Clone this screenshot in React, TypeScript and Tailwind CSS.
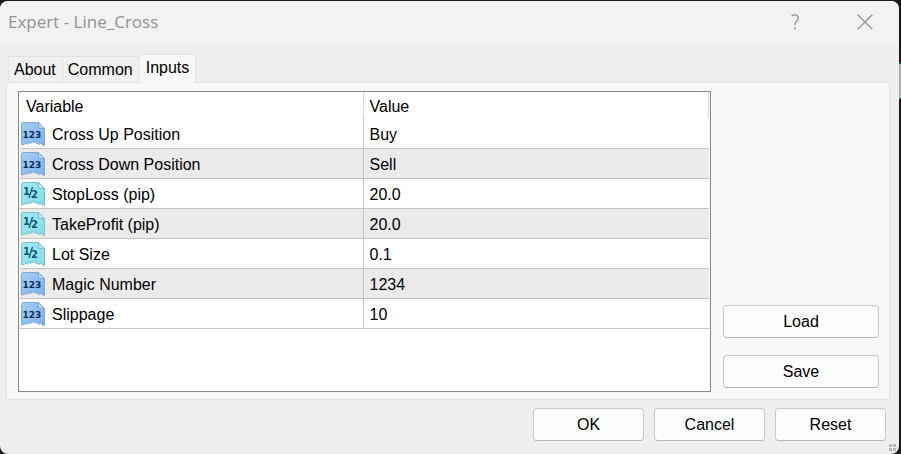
import { useState } from "react";

type InputKind = "int" | "double";

interface InputRow {
  name: string;
  value: string;
  kind: InputKind;
}

const rows: InputRow[] = [
  { name: "Cross Up Position", value: "Buy", kind: "int" },
  { name: "Cross Down Position", value: "Sell", kind: "int" },
  { name: "StopLoss (pip)", value: "20.0", kind: "double" },
  { name: "TakeProfit (pip)", value: "20.0", kind: "double" },
  { name: "Lot Size", value: "0.1", kind: "double" },
  { name: "Magic Number", value: "1234", kind: "int" },
  { name: "Slippage", value: "10", kind: "int" },
];

const tabs = ["About", "Common", "Inputs"];

const palettes = {
  int: { top: "#a6cdf3", bottom: "#7ab3ee", edge: "#7fa9d2", fold: "#b9d9f7", ink: "#0b2f5c" },
  double: { top: "#a2e8f2", bottom: "#7edfea", edge: "#7cbfca", fold: "#b5eff5", ink: "#125868" },
};

function KindIcon({ kind }: { kind: InputKind }) {
  const c = palettes[kind];
  return (
    <svg width="24" height="24" viewBox="0 0 24 24" aria-hidden="true" className="block shrink-0">
      <defs>
        <linearGradient id={`paper-${kind}`} x1="0" y1="0" x2="1" y2="1">
          <stop offset="0" stopColor={c.top} />
          <stop offset="1" stopColor={c.bottom} />
        </linearGradient>
      </defs>
      <path
        d="M2.5 0.5H17.5L23.5 6.5V23.5L21.5 23L20 20.5L18.5 22.8L17 20.5L15.5 22L14 19.3L12.5 21L11 19.3L9.5 21.8L8 19.8L6.5 22.4L5 20.8L3.5 22.5L0.5 22.8V2.5Q0.5 0.5 2.5 0.5Z"
        fill={`url(#paper-${kind})`}
        stroke={c.edge}
        strokeLinejoin="round"
      />
      <path d="M17.5 0.5V5Q17.5 6.5 19 6.5H23.5Z" fill={c.fold} stroke={c.edge} strokeLinejoin="round" />
      {kind === "int" ? (
        <text x="11" y="16" textAnchor="middle" fontSize="9" fontWeight="700" fontFamily="DejaVu Sans, sans-serif" fill={c.ink}>
          123
        </text>
      ) : (
        <g fill={c.ink} fontSize="10" fontWeight="700" fontFamily="DejaVu Sans, sans-serif">
          <text x="2" y="13">1</text>
          <path d="M11.5 5L8 16" stroke={c.ink} strokeWidth="1.3" />
          <text x="10" y="16">2</text>
        </g>
      )}
    </svg>
  );
}

function DialogButton({ label, className }: { label: string; className: string }) {
  return (
    <button
      type="button"
      className={`h-[33px] rounded border border-[#c9c9c9] border-b-[#b5b5b5] bg-[#fdfdfd] text-base leading-5 hover:bg-[#eef4fb] ${className}`}
    >
      {label}
    </button>
  );
}

export default function App() {
  const [active, setActive] = useState("Inputs");

  return (
    <div className="relative flex min-h-screen flex-col bg-[#1c191b] pt-px pr-0.5 font-['Liberation_Sans',Arial,sans-serif] text-base text-black">
      {/* Window behind the dialog */}
      <div className="absolute top-[63px] right-0 h-9 w-1 border-y border-[#3f7f52] bg-[#a9aaaa]" />

      <div className="relative flex grow flex-col rounded-lg bg-[#efefef]">
        {/* Title bar */}
        <header className="flex h-[45px] items-center rounded-t-lg bg-[#f2f2f2] pr-3 pb-1 pl-2 font-['Open_Sans','Noto_Sans',sans-serif] text-[#929292]">
          <h1 className="grow text-[17px] leading-5">Expert - Line_Cross</h1>
          <button type="button" aria-label="Help" className="mr-[26px] flex h-8 w-11 items-center justify-center">
            <svg width="10" height="16" viewBox="0 0 10 16" fill="none" stroke="currentColor" strokeWidth="1.3">
              <path d="M1.6 2C2.6 1.1 3.6 0.8 4.8 0.8C7 0.8 8.3 2 8.3 4C8.3 5.6 7.5 6.4 6.4 7.4C5.2 8.5 4.8 9.2 4.8 11.3" />
              <path d="M4 14.5H5.6" strokeWidth="1.8" />
            </svg>
          </button>
          <button type="button" aria-label="Close" className="flex h-8 w-11 items-center justify-center">
            <svg width="16" height="16" viewBox="0 0 16 16" fill="none" stroke="currentColor" strokeWidth="1.3">
              <path d="M0.7 0.7L15.3 15.3M15.3 0.7L0.7 15.3" />
            </svg>
          </button>
        </header>

        {/* Tabs */}
        <div role="tablist" className="relative mt-2 flex items-end pl-2">
          {tabs.map((tab) => (
            <button
              key={tab}
              type="button"
              role="tab"
              aria-selected={tab === active}
              onClick={() => setActive(tab)}
              className={
                tab === active
                  ? "-mb-px h-[29px] border border-b-0 border-[#e3e3e3] bg-[#f9f9f9] px-1.5 pb-0.5 leading-5"
                  : "h-[26px] border border-r-0 border-b-0 border-[#e2e2e2] bg-[#f1f1f1] pr-1.5 pl-[5px] leading-5"
              }
            >
              {tab}
            </button>
          ))}
        </div>

        <main className="mr-[9px] ml-1.5 flex grow gap-3 border border-[#e3e3e3] bg-[#f9f9f9] pt-2 pr-2.5 pb-[7px] pl-[11px]">
          <div className="grow border border-[#828790] bg-white px-px">
            <table className="w-full table-fixed border-collapse text-left">
              <colgroup>
                <col className="w-[343px]" />
                <col />
              </colgroup>
              <thead>
                <tr className="h-[26px]">
                  <th className="border-r border-[#dcdcdc] pt-[3px] pb-0 pl-1.5 font-normal leading-5">Variable</th>
                  <th className="border-r border-[#dcdcdc] pt-[3px] pb-0 pl-1.5 font-normal leading-5">Value</th>
                </tr>
              </thead>
              <tbody>
                {rows.map((row) => (
                  <tr key={row.name} className="h-[30px] border-b border-[#c4c4c4] even:bg-[#ebebeb]">
                    <td className="border-r border-[#c4c4c4] pt-0.5 pb-0 pl-px">
                      <div className="flex items-center gap-[7px] leading-5">
                        <KindIcon kind={row.kind} />
                        <span className="pt-0.5">{row.name}</span>
                      </div>
                    </td>
                    <td className="pt-1 pb-0 pl-1.5 leading-5">{row.value}</td>
                  </tr>
                ))}
              </tbody>
            </table>
          </div>

          <div className="flex w-39 shrink-0 flex-col justify-end gap-[17px] pb-1">
            <DialogButton label="Load" className="w-full" />
            <DialogButton label="Save" className="w-full" />
          </div>
        </main>

        <footer className="flex justify-end gap-2.5 pt-2 pr-[13px] pb-[13px]">
          <DialogButton label="OK" className="w-[111px]" />
          <DialogButton label="Cancel" className="w-[111px]" />
          <DialogButton label="Reset" className="w-[111px]" />
        </footer>

        {/* Resize grip */}
        <svg width="8" height="8" viewBox="0 0 8 8" aria-hidden="true" className="absolute right-0.5 bottom-0.5" fill="#b9b9b9">
          <path d="M0 0H3V3H0ZM4 0H7V3H4ZM0 4H3V7H0ZM4 4H7V7H4Z" />
        </svg>
      </div>
    </div>
  );
}
